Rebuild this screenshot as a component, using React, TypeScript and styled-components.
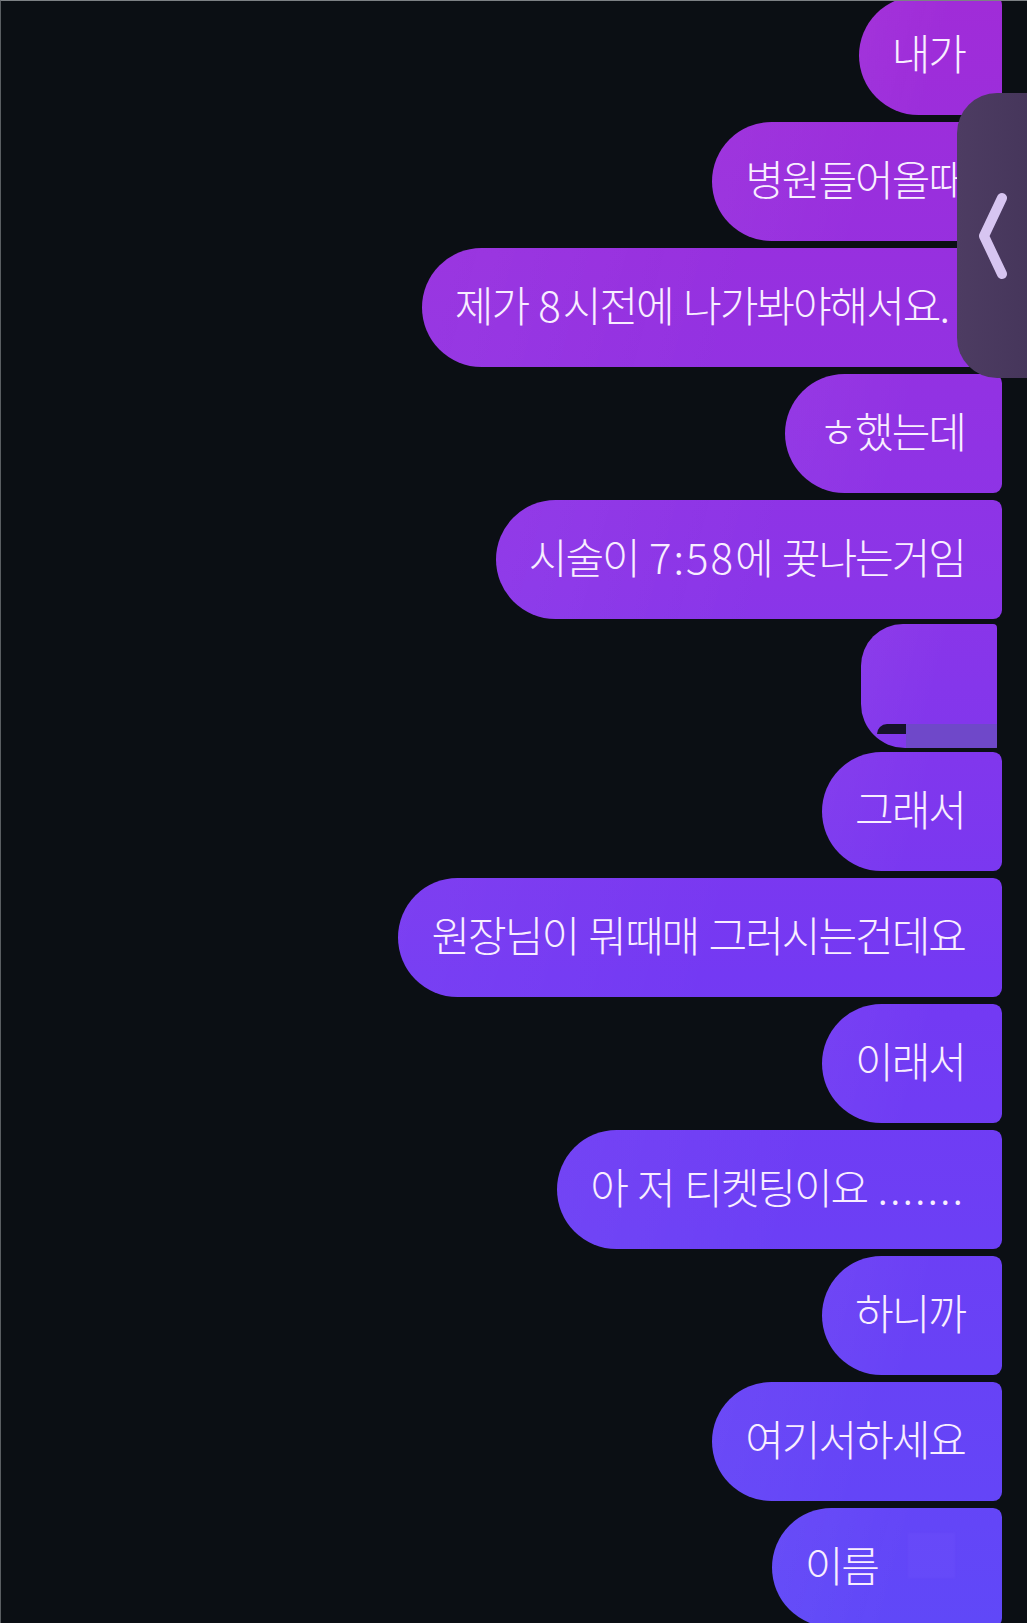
import styled, { createGlobalStyle } from 'styled-components';

const GlobalStyle = createGlobalStyle`
  html, body {
    margin: 0;
    padding: 0;
    background: #0b0f14;
  }
  * {
    box-sizing: border-box;
  }
`;

const Screen = styled.div`
  position: relative;
  width: 1027px;
  height: 1623px;
  overflow: hidden;
  background: #0b0f14;
  border-top: 1px solid #7d8185;
  border-left: 1px solid #5a5e62;
  font-family: 'Noto Sans CJK KR', 'Noto Sans', sans-serif;
`;

const Thread = styled.div`
  display: flex;
  flex-direction: column;
  align-items: flex-end;
  gap: 7px;
  margin-top: -5px;
  padding-right: 25px;
`;

const Bubble = styled.div<{ $tail?: number }>`
  position: relative;
  display: flex;
  align-items: center;
  height: 119px;
  padding: 0 ${({ $tail = 0 }) => 37 + $tail}px 7px 33px;
  border-radius: 60px 9px 9px 60px;
  background:
    linear-gradient(105deg, rgba(255, 255, 255, 0.035), rgba(255, 255, 255, 0) 55%),
    linear-gradient(180deg, #a02cd8 0%, #8b35e8 36%, #7439f3 60%, #6048f8 100%);
  background-attachment: scroll, fixed;
  color: #f8eeff;
  font-size: 42px;
  font-weight: 300;
  letter-spacing: -2px;
  word-spacing: 3px;
  line-height: 1;
  white-space: pre;
`;

const Latin = styled.span`
  letter-spacing: 2px;
`;

const GlitchBubble = styled(Bubble)`
  width: 136px;
  height: 124px;
  margin: -2px 5px -3px 0;
  border-radius: 42px 4px 2px 44px;
`;

const GlitchStrip = styled.span`
  position: absolute;
  left: 45px;
  right: 0;
  bottom: 0;
  height: 24px;
  background: #6d4ac6;
  opacity: 0.9;

  &::before {
    content: '';
    position: absolute;
    left: -29px;
    top: 0;
    width: 29px;
    height: 10px;
    background: #0b0f14;
    border-radius: 10px 0 0 0;
  }
`;

const Ghost = styled.span`
  width: 47px;
  height: 45px;
  margin: -18px 10px 0 30px;
  background: rgba(120, 90, 255, 0.18);
  filter: blur(1px);
`;

const SidePanel = styled.div`
  position: absolute;
  top: 92px;
  left: 956px;
  right: 0;
  height: 285px;
  display: flex;
  align-items: center;
  padding-left: 20px;
  border-radius: 40px 0 0 40px;
  background: linear-gradient(90deg, #4d3c62, #46365b);
`;

const messages: { text: string | null; tail?: number }[] = [
  { text: '내가' },
  { text: '병원들어올때' },
  { text: '제가 8시전에 나가봐야해서요.', tail: 13 },
  { text: 'ㅎ했는데' },
  { text: '시술이 7:58에 꿎나는거임' },
  { text: null },
  { text: '그래서' },
  { text: '원장님이 뭐때매 그러시는건데요' },
  { text: '이래서' },
  { text: '아 저 티켓팅이요 .......' },
  { text: '하니까' },
  { text: '여기서하세요' },
];

function renderText(text: string) {
  return text.split(/([0-9:.]+)/).map((part, i) =>
    /^[0-9:.]+$/.test(part) ? <Latin key={i}>{part}</Latin> : part
  );
}

export default function App() {
  return (
    <>
      <GlobalStyle />
      <Screen>
        <Thread>
          {messages.map((m, i) =>
            m.text === null ? (
              <GlitchBubble key={i}>
                <GlitchStrip />
              </GlitchBubble>
            ) : (
              <Bubble key={i} $tail={m.tail}>
                {renderText(m.text)}
              </Bubble>
            )
          )}
          <Bubble>
            이름
            <Ghost />
          </Bubble>
        </Thread>
        <SidePanel>
          <svg width="34" height="92" viewBox="0 0 34 92" fill="none">
            <path
              d="M25 8 L7 46 L25 84"
              stroke="#d7c5f1"
              strokeWidth="10"
              strokeLinecap="round"
              strokeLinejoin="round"
            />
          </svg>
        </SidePanel>
      </Screen>
    </>
  );
}
